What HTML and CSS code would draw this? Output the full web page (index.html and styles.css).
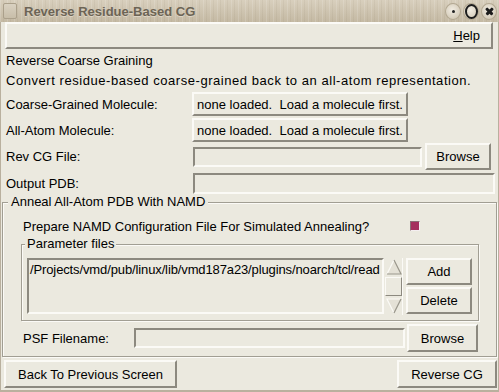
FILE: index.html
```html
<!DOCTYPE html>
<html lang="en">

<head>
    <meta charset="UTF-8">
    <title>Reverse Residue-Based CG</title>
    <link rel="stylesheet" href="styles.css">
</head>

<body>
    <div class="window">
        <!-- Title bar -->
        <div class="titlebar">
            <div class="win-icon"></div>
            <span class="title">Reverse Residue-Based CG</span>
            <div class="win-buttons">
                <span class="wb wb-min"></span>
                <span class="wb wb-max"></span>
                <span class="wb wb-close"></span>
            </div>
        </div>

        <div class="client">
            <!-- Menu bar -->
            <div class="menubar">
                <span class="menu-item"><u>H</u>elp</span>
            </div>

            <p class="line">Reverse Coarse Graining</p>
            <p class="line line-wide">Convert residue-based coarse-grained back to an all-atom representation.</p>

            <div class="row row-mol">
                <span class="label">Coarse-Grained Molecule:</span>
                <button class="btn btn-mol">none loaded.&nbsp; Load a molecule first.</button>
            </div>
            <div class="row row-mol row-mol2">
                <span class="label">All-Atom Molecule:</span>
                <button class="btn btn-mol">none loaded.&nbsp; Load a molecule first.</button>
            </div>
            <div class="row row-file">
                <span class="label">Rev CG File:</span>
                <div class="entry entry-revcg"></div>
                <button class="btn btn-browse">Browse</button>
            </div>
            <div class="row row-out">
                <span class="label">Output PDB:</span>
                <div class="entry entry-out"></div>
            </div>

            <!-- Anneal frame -->
            <fieldset class="frame anneal">
                <legend>Anneal All-Atom PDB With NAMD</legend>

                <div class="prepare">
                    <span class="prepare-label">Prepare NAMD Configuration File For Simulated Annealing?</span>
                    <span class="check"></span>
                </div>

                <fieldset class="frame params">
                    <legend>Parameter files</legend>
                    <div class="params-body">
                        <div class="listbox">/Projects/vmd/pub/linux/lib/vmd187a23/plugins/noarch/tcl/read</div>
                        <div class="scrollbar">
                            <svg class="arrow" width="18" height="18" viewBox="0 0 18 18">
                                <polygon points="9,2 16,16 2,16" fill="#e4e1d6"/>
                                <polyline points="2,16 9,2" fill="none" stroke="#fbfaf6" stroke-width="1.2"/>
                                <polyline points="9,2 16,16 2,16" fill="none" stroke="#9a978c" stroke-width="1.2"/>
                            </svg>
                            <span class="slider"></span>
                            <svg class="arrow" width="18" height="18" viewBox="0 0 18 18">
                                <polygon points="2,2 16,2 9,16" fill="#e4e1d6"/>
                                <polyline points="9,16 2,2 16,2" fill="none" stroke="#fbfaf6" stroke-width="1.2"/>
                                <polyline points="16,2 9,16" fill="none" stroke="#9a978c" stroke-width="1.2"/>
                            </svg>
                        </div>
                        <div class="list-buttons">
                            <button class="btn btn-list">Add</button>
                            <button class="btn btn-list">Delete</button>
                        </div>
                    </div>
                </fieldset>

                <div class="row row-psf">
                    <span class="label-psf">PSF Filename:</span>
                    <div class="entry entry-psf"></div>
                    <button class="btn btn-browse2">Browse</button>
                </div>
            </fieldset>

            <div class="footer">
                <button class="btn btn-back">Back To Previous Screen</button>
                <button class="btn btn-rev">Reverse CG</button>
            </div>
        </div>
    </div>
</body>

</html>
```

FILE: styles.css
```css
* {
    margin: 0;
    padding: 0;
    box-sizing: border-box;
    font-family: 'Liberation Sans', Arial, sans-serif;
}

body {
    width: 499px;
    height: 392px;
    overflow: hidden;
    background: #c9bea8;
    font-size: 13px;
    color: #000;
}

.window {
    width: 499px;
    height: 392px;
    display: flex;
    flex-direction: column;
    background: #b9b09e;
}

/* title bar */
.titlebar {
    height: 22px;
    flex-shrink: 0;
    display: flex;
    align-items: center;
    padding: 0 2px 0 3px;
    background:
        repeating-linear-gradient(90deg, rgba(255, 255, 255, 0.14) 0 1px, transparent 1px 3px, rgba(120, 105, 80, 0.08) 3px 4px, transparent 4px 7px),
        linear-gradient(#d8cfbd, #c4b9a3);
}

.win-icon {
    width: 14px;
    height: 16px;
    border: 1px solid #aba08b;
    border-radius: 2px;
    background: linear-gradient(#d9d1c1, #c8bea9);
}

.title {
    margin-left: 7px;
    font-weight: bold;
    font-size: 13px;
    color: #6c6455;
    text-shadow: 0 1px 0 #ddd5c5;
}

.win-buttons {
    margin-left: auto;
    display: flex;
    align-items: center;
    gap: 2px;
}

.wb {
    width: 16px;
    height: 17px;
    flex-shrink: 0;
    position: relative;
    border-radius: 50%;
    border: 1px solid #b3a892;
    background: radial-gradient(circle at 45% 40%, #f1ece2, #d6cdbb 70%, #c4b9a3);
    display: flex;
    align-items: center;
    justify-content: center;
}

.wb-min::before {
    content: '';
    width: 3px;
    height: 3px;
    border-radius: 50%;
    background: #222;
}

.wb-max::before {
    content: '';
    width: 9px;
    height: 11px;
    border: 2px solid #1d1d1d;
    border-radius: 50%;
}

/* the x of the close button, drawn as two crossed bars */
.wb-close::before,
.wb-close::after {
    content: '';
    position: absolute;
    left: 3px;
    top: 6px;
    width: 9px;
    height: 2.5px;
    border-radius: 1px;
    background: #1d1d1d;
    transform: rotate(45deg);
}

.wb-close::after {
    transform: rotate(-45deg);
}

/* client area */
.client {
    flex: 1;
    margin: 0 1px 2px 1px;
    background: #ebe9df;
    display: flex;
    flex-direction: column;
}

.menubar {
    height: 27px;
    flex-shrink: 0;
    margin: 0 5px 2px 4px;
    border: 2px solid;
    border-color: #fbfaf6 #8c897f #8c897f #fbfaf6;
    display: flex;
    justify-content: flex-end;
    align-items: center;
    padding-right: 11px;
}

.line {
    height: 20px;
    line-height: 20px;
    padding-left: 5px;
    white-space: nowrap;
}

.line-wide {
    letter-spacing: 0.55px;
}

/* form rows */
.row {
    display: flex;
    align-items: center;
    flex-shrink: 0;
}

.label {
    width: 191px;
    padding-left: 5px;
}

.row-mol {
    height: 24px;
    margin-top: 1px;
}

.row-mol2 {
    margin-top: 2px;
}

.row-file {
    height: 27px;
    margin-top: 1px;
}

.row-out {
    height: 21px;
    margin-top: 3px;
}

button {
    font-size: 13px;
    background: #ebe9df;
    color: #000;
}

.btn {
    border: 2px solid;
    border-color: #fbfaf6 #8c897f #8c897f #fbfaf6;
}

.btn-mol {
    width: 216px;
    height: 24px;
}

.entry {
    height: 20px;
    border: 2px solid;
    border-color: #8c897f #fbfaf6 #fbfaf6 #8c897f;
    background: #ebe9df;
}

.entry-revcg {
    width: 229px;
    margin-left: 1px;
}

.btn-browse {
    width: 66px;
    height: 27px;
    margin-left: 3px;
}

.entry-out {
    flex: 1;
    height: 21px;
    margin-left: 1px;
    margin-right: 3px;
}

/* labelled frames */
.frame {
    border: 1px solid #a19e93;
    box-shadow: inset 1px 1px 0 #fbfaf6, 1px 1px 0 #fbfaf6;
    flex-shrink: 0;
}

.frame legend {
    line-height: 14px;
    background: #ebe9df;
}

.anneal {
    margin: 1px 1px 0 1px;
    padding: 7px 0 4px 0;
    height: 162px;
}

.anneal > legend {
    margin-left: 5px;
    padding: 0 3px;
}

.prepare {
    display: flex;
    align-items: center;
    height: 20px;
    padding-left: 20px;
}

.prepare-label {
    width: 387px;
}

.check {
    width: 10px;
    height: 10px;
    background: #a5305e;
    border: 1px solid;
    border-color: #8a7075 #f4eef0 #f4eef0 #8a7075;
}

.params {
    margin: 1px 17px 0 18px;
    height: 84px;
    padding: 7px 6px 5px 5px;
}

.params legend {
    margin-left: -2px;
    padding: 0 2px;
}

.params-body {
    display: flex;
}

.listbox {
    width: 357px;
    height: 56px;
    border: 2px solid;
    border-color: #8c897f #fbfaf6 #fbfaf6 #8c897f;
    padding: 2px 0 0 1px;
    white-space: nowrap;
    overflow: hidden;
    letter-spacing: -0.12px;
}

.scrollbar {
    width: 18px;
    height: 57px;
    margin-left: 1px;
    display: flex;
    flex-direction: column;
    border-right: 1px solid #fbfaf6;
}

.arrow {
    display: block;
    flex-shrink: 0;
}

.slider {
    flex: 1;
    margin: 1px 0;
    border: 1px solid;
    border-color: #fbfaf6 #8c897f #8c897f #fbfaf6;
}

.list-buttons {
    display: flex;
    flex-direction: column;
    gap: 2px;
    margin-left: 3px;
}

.btn-list {
    width: 66px;
    height: 27px;
}

.row-psf {
    margin-top: 3px;
    height: 28px;
    padding-left: 20px;
}

.label-psf {
    width: 111px;
}

.entry-psf {
    width: 271px;
}

.btn-browse2 {
    width: 71px;
    height: 28px;
    margin-left: 2px;
}

/* bottom buttons */
.footer {
    margin-top: 3px;
    display: flex;
    justify-content: space-between;
    flex-shrink: 0;
}

.btn-back {
    width: 173px;
    height: 28px;
    margin-left: 3px;
}

.btn-rev {
    width: 100px;
    height: 28px;
    margin-right: 1px;
}
```
